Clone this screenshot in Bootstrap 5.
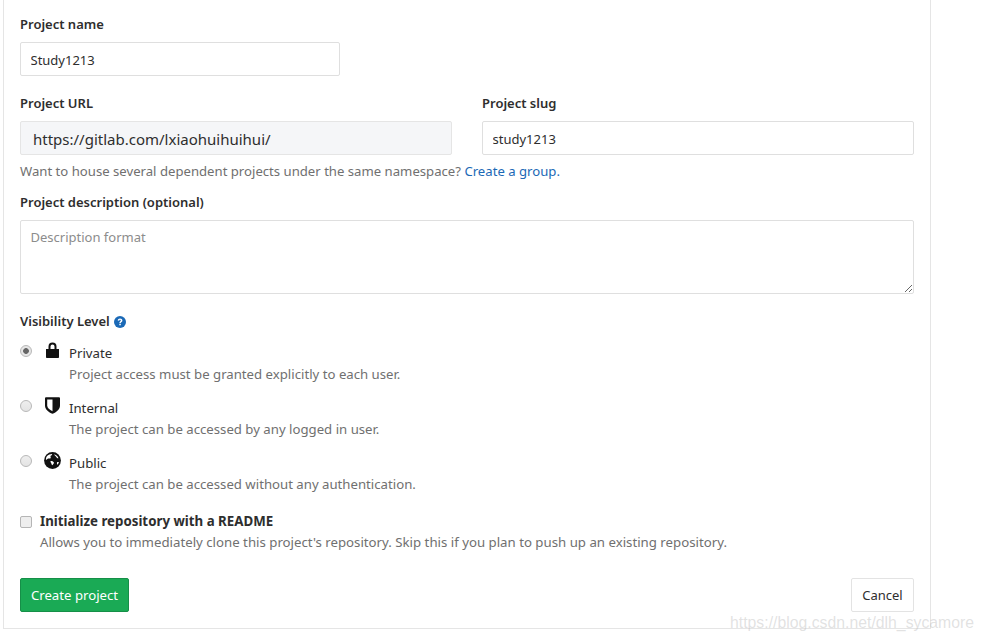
<!DOCTYPE html>
<html lang="en">
<head>
<meta charset="utf-8">
<title>New project</title>
<link href="https://cdn.jsdelivr.net/npm/bootstrap@5.3.0/dist/css/bootstrap.min.css" rel="stylesheet">
<style>
html, body { height: 641px; overflow: hidden; background: #fff; }
body { font-family: "Noto Sans", "Open Sans", sans-serif; font-size: 13.2px; color: #2e2e2e; line-height: 18px; position: relative; }
.sheet { width: 928px; height: 629px; margin-left: 3px; border: 1px solid #e5e5e5; border-top: 0; padding: 15px 16px 0; }
.fld-label { display: block; font-weight: 600; line-height: 18px; margin: 0 0 9px; font-size: 13px; color: #2e2e2e; }
.fld-input { height: 34px; border: 1px solid #dfdfdf; border-radius: 2px; padding: 1px 10px 0 9.500px; font-size: 13px; color: #2e2e2e; line-height: 32px; box-shadow: none; }
.fld-input::placeholder { color: #8c8c8c; }
.name-box { width: 320px; }
.url-box { height: 34px; background: #f5f6f8; border: 1px solid #e5e5e5; border-radius: 2px; padding: 0 12px; font-size: 15px; line-height: 34px; color: #2e2e2e; }
.row-url { --bs-gutter-x: 30px; margin-top: 18px; }
.tip { color: #707070; line-height: 18px; margin-top: 7px; font-size: 13.150px; }
.tip a { color: #1b69b6; text-decoration: none; }
.desc-label { margin-top: 13px; }
.desc-box { height: 74px; display: block; padding-top: 7px; line-height: 18px; resize: vertical; }
.vis-head { font-weight: 600; margin-top: 18px; line-height: 18px; font-size: 13px; }
.vis-head svg { vertical-align: -2px; margin-left: 1px; }
.vis-row { display: flex; height: 55px; }
.vis-first { margin-top: 5px; }
.vis-radio { width: 12px; height: 12px; margin: 9.500px 0 0; flex: none; appearance: none; border: 1px solid #b8b8b8; border-radius: 50%; background: linear-gradient(#eee, #e4e4e4); }
.vis-radio:checked { background: radial-gradient(circle, #666 0 2.5px, #e6e6e6 3.2px); }
.vis-icon { width: 17px; height: 17px; margin: 7px 0 0 12px; flex: none; }
.vis-text { margin-left: 8px; padding-top: 9px; }
.vis-text .sub { color: #707070; margin-top: 3px; }
.readme { display: flex; margin-top: 12px; }
.readme-box { width: 12px; height: 12px; margin: 4px 8px 0 0; flex: none; appearance: none; border: 1px solid #b5b5b5; border-radius: 2px; background: #eee; }
.readme b { font-weight: 700; color: #2e2e2e; font-size: 13.300px; }
.readme .sub { color: #707070; margin-top: 3px; font-size: 13.240px; }
.actions { margin-top: 27px; }
.go-btn { height: 34px; width: 109px; padding: 1px 0 0; font-size: 13.200px; color: #fff; background: #1aaa55; border: 1px solid #168f48; border-radius: 2px; }
.stop-btn { height: 34px; width: 63px; padding: 1px 0 0; font-size: 13px; color: #2e2e2e; background: #fff; border: 1px solid #e3e3e3; border-radius: 2px; }
.mark-wm { position: absolute; left: 730px; top: 611px; font-family: "Liberation Sans", sans-serif; font-size: 15.800px; line-height: 24px; color: rgba(185,185,185,.42); white-space: nowrap; }
</style>
</head>
<body>
<div class="sheet">
  <label class="fld-label">Project name</label>
  <input class="form-control fld-input name-box" value="Study1213">
  <div class="row row-url">
    <div class="col-6">
      <label class="fld-label">Project URL</label>
      <div class="url-box">https://gitlab.com/lxiaohuihuihui/</div>
    </div>
    <div class="col-6">
      <label class="fld-label">Project slug</label>
      <input class="form-control fld-input" value="study1213">
    </div>
  </div>
  <div class="tip">Want to house several dependent projects under the same namespace? <a href="#">Create a group.</a></div>
  <label class="fld-label desc-label">Project description (optional)</label>
  <textarea class="form-control fld-input desc-box" placeholder="Description format"></textarea>
  <div class="vis-head">Visibility Level
    <svg width="12" height="12" viewBox="0 0 12 12"><circle cx="6" cy="6" r="6" fill="#1b69b6"/><path d="M3.700 4.600C3.800 3.200 4.800 2.500 6 2.500c1.400 0 2.400.8 2.400 1.900 0 1.500-1.600 1.500-1.600 2.700H5.300c0-1.800 1.500-1.800 1.500-2.700 0-.4-.3-.6-.8-.6-.5 0-.8.300-.8.900z M5.300 7.700h1.500v1.600H5.300z" fill="#fff"/></svg>
  </div>
  <div class="vis-row vis-first">
    <input type="radio" class="vis-radio" name="v" checked>
    <svg class="vis-icon" viewBox="0 0 17 17"><path d="M4.500 7V4.500a4 4 0 0 1 8 0V7h-2V4.600a2 2 0 0 0-4 0V7z M2 7h13v8.200a.8.8 0 0 1-.8.8H2.800a.8.8 0 0 1-.8-.8z" fill="#111"/></svg>
    <div class="vis-text"><div>Private</div><div class="sub">Project access must be granted explicitly to each user.</div></div>
  </div>
  <div class="vis-row">
    <input type="radio" class="vis-radio" name="v">
    <svg class="vis-icon" viewBox="0 0 17 17"><path d="M2 .2h13a1 1 0 0 1 1 1V8.500c0 3.800-3.600 6.800-7.500 8.300C4.600 15.300 1 12.300 1 8.500V1.200a1 1 0 0 1 1-1z" fill="#111"/><path d="M3.200 2.400h5.300v11.800C5.600 12.900 3.200 10.900 3.200 8.500z" fill="#fff"/></svg>
    <div class="vis-text"><div>Internal</div><div class="sub">The project can be accessed by any logged in user.</div></div>
  </div>
  <div class="vis-row">
    <input type="radio" class="vis-radio" name="v">
    <svg class="vis-icon" viewBox="0 0 18 18"><circle cx="9" cy="9" r="8.900" fill="#111"/><path d="M3 4.500C4.500 2.800 6.500 2 8.500 2c.5.800-.5 1.500-1.500 2-.5 1 .5 1.500 0 2.500-1 1-2.500 0-3.500 1-.5.800-1 .8-1.500.5 0-1.300.3-2.500 1-3.500z M11 2.500c2 .7 3.500 2.200 4.300 4-1 .5-2-.5-2.500-1.500-.8-.8-2-1.200-1.800-2.500z M7 9.500c1.500-.3 3 .5 3.500 1.500.3 1-1 1.800-1.500 3-.8 0-1-1-1.300-2-.3-.8-1.200-1.500-.7-2.500z M14 10.500h1.800c-.2 1.200-.8 2.300-1.600 3.100-.6-.8-.6-2.200-.2-3.100z" fill="#fff"/></svg>
    <div class="vis-text"><div>Public</div><div class="sub">The project can be accessed without any authentication.</div></div>
  </div>
  <div class="readme">
    <input type="checkbox" class="readme-box">
    <div><b>Initialize repository with a README</b><div class="sub">Allows you to immediately clone this project's repository. Skip this if you plan to push up an existing repository.</div></div>
  </div>
  <div class="actions d-flex justify-content-between">
    <button class="btn go-btn">Create project</button>
    <a class="btn stop-btn d-flex align-items-center justify-content-center" href="#">Cancel</a>
  </div>
</div>
<div class="mark-wm">https://blog.csdn.net/dlh_sycamore</div>
<script src="https://cdn.jsdelivr.net/npm/bootstrap@5.3.0/dist/js/bootstrap.bundle.min.js"></script>
</body>
</html>
